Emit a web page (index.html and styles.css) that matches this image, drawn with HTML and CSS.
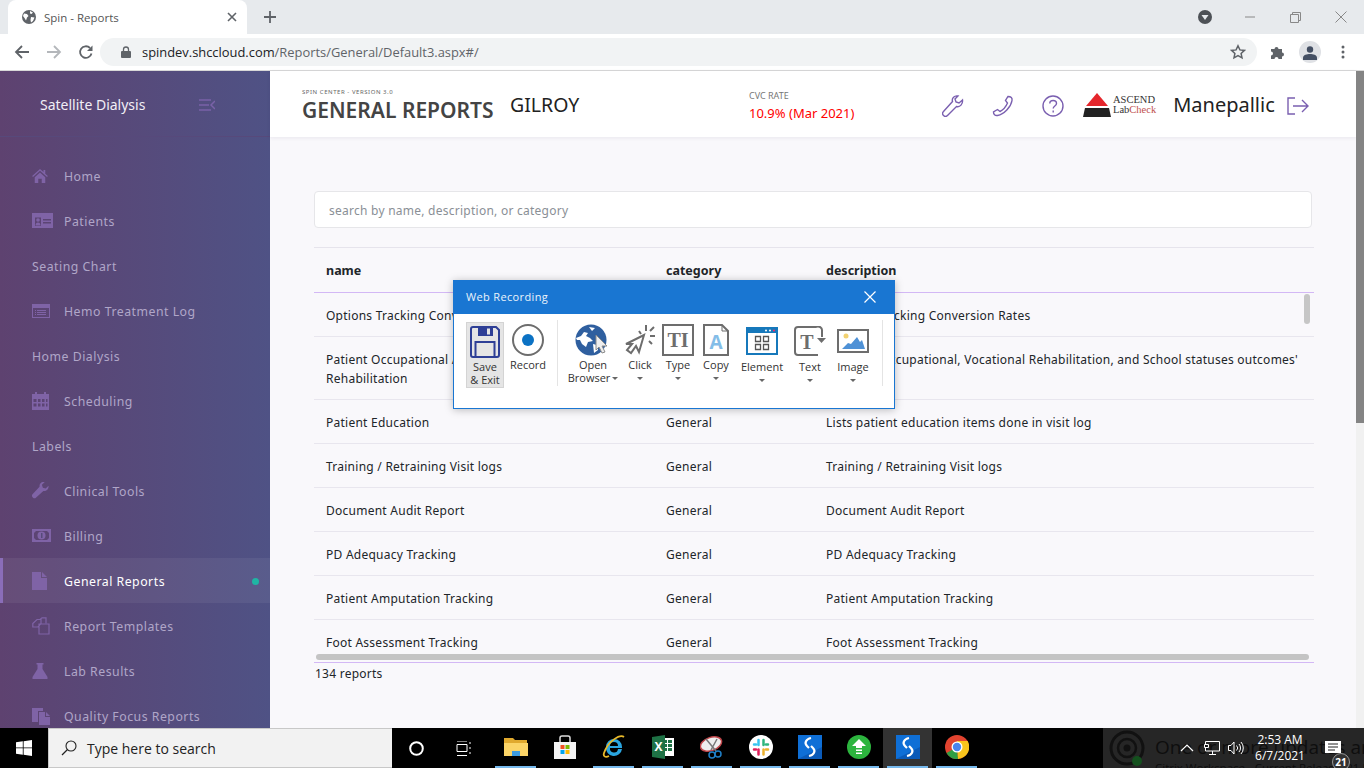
FILE: index.html

```html
<!DOCTYPE html>
<html>
<head>
  <title>Spin - Reports</title>
  <link rel="stylesheet" href="styles.css">
</head>
<body>
  <!-- browser tabs -->
  <div class="tabstrip">
    <div class="tab">
      <svg class="tab-globe" width="14" height="14" viewBox="0 0 14 14"><circle cx="7" cy="7" r="7" fill="#5f6368"/><path d="M2 3.500l3 .5 1.500 2L5 7.500l-1 3L2.500 8 1 6zM8 1l3 1.500L9.500 4 8 3.500zM9 7l3.500.5L11 11l-2 1.500-.5-2.500z" fill="#fff"/></svg>
      <span class="tab-title">Spin - Reports</span>
      <svg class="tab-close" width="10" height="10" viewBox="0 0 10 10"><path d="M1 1l8 8M9 1l-8 8" stroke="#5f6368" stroke-width="1.600"/></svg>
    </div>
    <svg class="tab-new" width="14" height="14" viewBox="0 0 14 14"><path d="M7 1v12M1 7h12" stroke="#5f6368" stroke-width="1.800"/></svg>
    <div class="window-btns">
      <svg class="win-drop" width="16" height="16" viewBox="0 0 16 16"><circle cx="8" cy="8" r="7" fill="#4d5156"/><path d="M4.500 6h7L8 11z" fill="#e7eaed"/></svg>
      <svg class="win-min" width="10" height="10" viewBox="0 0 10 10"><path d="M0 5h10" stroke="#888"/></svg>
      <svg class="win-max" width="11" height="11" viewBox="0 0 11 11"><path d="M.5 2.500h8v8h-8zM2.500 2.500v-2h8v8h-2" fill="none" stroke="#888"/></svg>
      <svg class="win-close" width="12" height="12" viewBox="0 0 12 12"><path d="M.5.5l11 11M11.500.5l-11 11" stroke="#888"/></svg>
    </div>
  </div>

  <!-- address bar -->
  <div class="toolbar">
    <svg class="nav-btn" width="16" height="16" viewBox="0 0 16 16"><path d="M15 8H2M8 2L2 8l6 6" fill="none" stroke="#5f6368" stroke-width="1.800"/></svg>
    <svg class="nav-btn" width="16" height="16" viewBox="0 0 16 16"><path d="M1 8h13M8 2l6 6-6 6" fill="none" stroke="#b4b7bb" stroke-width="1.800"/></svg>
    <svg class="nav-btn" width="16" height="16" viewBox="0 0 16 16"><path d="M13.500 9.500A5.800 5.800 0 1 1 12 4" fill="none" stroke="#5f6368" stroke-width="1.800"/><path d="M14.500 1.500v5.500H9z" fill="#5f6368"/></svg>
    <div class="omnibox">
      <svg width="10" height="12" viewBox="0 0 10 12"><path d="M2.500 5V3.500a2.500 2.500 0 0 1 5 0V5" fill="none" stroke="#5f6368" stroke-width="1.300"/><rect y="5" width="10" height="7" rx="1" fill="#5f6368"/></svg>
      <span class="url"><b>spindev.shccloud.com</b>/Reports/General/Default3.aspx#/</span>
      <svg class="star" width="16" height="16" viewBox="0 0 16 16"><path d="M8 1.800l1.900 4.100 4.500.5-3.300 3 .9 4.500L8 11.700l-4 2.200.9-4.500-3.300-3 4.500-.5z" fill="none" stroke="#5f6368" stroke-width="1.500"/></svg>
    </div>
    <svg class="puzzle" width="16" height="16" viewBox="0 0 16 16"><path d="M1 5h3.500a2 2 0 1 1 4 0H12v3.500a2 2 0 1 1 0 4V15H8.500a2 2 0 1 0-4 0H1v-3.500a2 2 0 1 0 0-4z" fill="#5f6368"/></svg>
    <div class="avatar"><svg width="14" height="14" viewBox="0 0 14 14"><circle cx="7" cy="3.500" r="3.200" fill="#444f63"/><path d="M0 14v-2.500C0 9 4 8 7 8s7 1 7 3.500V14z" fill="#444f63"/></svg></div>
    <svg class="kebab" width="4" height="14" viewBox="0 0 4 14"><circle cx="2" cy="2" r="1.500" fill="#5f6368"/><circle cx="2" cy="7" r="1.500" fill="#5f6368"/><circle cx="2" cy="12" r="1.500" fill="#5f6368"/></svg>
  </div>

  <div class="app">
    <!-- side menu -->
    <aside class="sidebar">
      <div class="brand">
        <span>Satellite Dialysis</span>
        <svg width="16" height="12" viewBox="0 0 16 12"><path d="M0 1h12M0 6h10M0 11h12M16 2l-4 4 4 4" fill="none" stroke="#7a62a8" stroke-width="1.500"/></svg>
      </div>
      <nav class="menu">
        <a class="menu-item"><span class="glyph"><svg width="16" height="14" viewBox="0 0 18 16"><path d="M9 0L0 8l1 1 8-7 8 7 1-1-3-2.700V1h-2v2.500zM3 9.500V16h4v-5h4v5h4V9.500L9 4z"/></svg></span>Home</a>
        <a class="menu-item"><span class="glyph"><svg width="21" height="15" viewBox="0 0 21 15"><path fill-rule="evenodd" d="M0 0h21v15H0zM3 4.500V13h6V4.500zM11 6v1.500h8V6zm0 3v1.500h8V9z"/><path d="M3.500 12.500c0-2 1-3 2.500-3s2.500 1 2.500 3z"/><circle cx="6" cy="7" r="1.800"/></svg></span>Patients</a>
        <a class="menu-item">Seating Chart</a>
        <a class="menu-item"><span class="glyph"><svg width="18" height="14" viewBox="0 0 18 14"><path fill-rule="evenodd" d="M0 0h18v14H0zm1 4v9h16V4zm4 2h9v1H5zm0 2h9v1H5zm0 2h9v1H5zM3 6h1v1H3zm0 2h1v1H3zm0 2h1v1H3z"/></svg></span>Hemo Treatment Log</a>
        <a class="menu-item">Home Dialysis</a>
        <a class="menu-item"><span class="glyph"><svg width="17" height="18" viewBox="0 0 17 18"><path fill-rule="evenodd" d="M3 0h2v2h7V0h2v2h3v16H0V2h3zM1.500 7v3h3V7zm4.500 0v3h2.500V7zm4 0v3h2.500V7zm4 0v3h1.500V7zM1.500 11.500v3h3v-3zm4.500 0v3h2.500v-3zm4 0v3h2.500v-3zm4 0v3h1.500v-3z"/></svg></span>Scheduling</a>
        <a class="menu-item">Labels</a>
        <a class="menu-item"><span class="glyph"><svg width="17" height="17" viewBox="0 0 18 18"><path d="M17.500 4l-3 3-3-1-1-3 3-3c-3-.8-6 1.500-5.500 5L.800 12.800a2.500 2.500 0 0 0 3.600 3.600L12 9.500c3.500.5 6-2.500 5.500-5.500z"/></svg></span>Clinical Tools</a>
        <a class="menu-item"><span class="glyph"><svg width="19" height="13" viewBox="0 0 19 13"><path fill-rule="evenodd" d="M0 0h19v13H0zM4 2L2 4v5l2 2h11l2-2V4l-2-2z"/><circle cx="9.500" cy="6.500" r="4"/><path d="M9 4h1.500v5H9z" fill="#564a7a"/></svg></span>Billing</a>
        <a class="menu-item active"><span class="glyph"><svg width="15" height="18" viewBox="0 0 15 18"><path d="M0 0h9v6h6v12H0zM10 0l5 5h-5z"/></svg></span>General Reports<i class="dot"></i></a>
        <a class="menu-item"><span class="glyph"><svg class="line" width="18" height="18" viewBox="0 0 18 18"><path d="M8 2.500L10 .8h4v5.500M.8 6.500L5 2.500h4v4l-3 3.500H.8zM7 7h10v10H7z" stroke-width="1.200"/></svg></span>Report Templates</a>
        <a class="menu-item"><span class="glyph"><svg width="16" height="16" viewBox="0 0 16 16"><path d="M4.500 0h7v1.500h-1V6l5 8v2H.5v-2l5-8V1.500h-1z"/></svg></span>Lab Results</a>
        <a class="menu-item"><span class="glyph"><svg width="18" height="18" viewBox="0 0 18 18"><path d="M0 1h11v3H6v11H0zM7 5h6v5h5v8H7zM14 5l4 4h-4z"/></svg></span>Quality Focus Reports</a>
      </nav>
    </aside>

    <main class="main">
      <header class="topbar">
        <div class="page-title">
          <small>SPIN CENTER - VERSION 3.0</small>
          <h1>GENERAL REPORTS</h1>
        </div>
        <div class="site-name">GILROY</div>
        <div class="rate">
          <small>CVC RATE</small>
          <span>10.9% (Mar 2021)</span>
        </div>
        <svg class="top-icon first" width="22" height="22" viewBox="0 0 22 22"><path d="M20.500 5l-3.500 3-3-1-1-3 3-3c-3.500-.7-6.500 2-5.500 5.500L1.500 16.500a2.800 2.800 0 0 0 4 4L14.500 11.500c3.500 1 6.500-2.500 6-6.500z"/></svg>
        <svg class="top-icon" width="22" height="22" viewBox="0 0 22 22"><path d="M16 1.500c3 0 4.500 1.500 4 4C19 12 12 19.500 5.500 20.500c-2.500.4-4-1-4-3.500l4-2.500 2.500 2c3-1.500 6-5 7.500-8.500l-2-2.500z"/></svg>
        <svg class="top-icon" width="22" height="22" viewBox="0 0 22 22"><circle cx="11" cy="11" r="10"/><path d="M7.800 8.500c0-4 6.700-4 6.700 0 0 2.500-3.300 2.500-3.300 5"/><path d="M11.200 15.500v2"/></svg>
        <div class="lab-logo">
          <svg width="28" height="24" viewBox="0 0 28 24"><path d="M14 0L25 13H3z" fill="#e5262c"/><path d="M2 15h24l2 9H0z" fill="#222"/></svg>
          <div class="lab-text"><span>ASCEND</span><span>Lab<em>Check</em></span></div>
        </div>
        <div class="user-name">Manepallic</div>
        <svg class="top-icon logout" width="22" height="18" viewBox="0 0 22 18"><path d="M8 1H1v16h7M6 9h15M15 3l6 6-6 6"/></svg>
      </header>

      <section class="content">
        <div class="search">search by name, description, or category</div>
        <div class="table-wrap">
          <table class="reports">
            <thead>
              <tr><th class="col-name">name</th><th class="col-cat">category</th><th>description</th></tr>
            </thead>
            <tbody>
              <tr><td>Options Tracking Conversion Rates</td><td>General</td><td>Options Tracking Conversion Rates</td></tr>
              <tr class="tall"><td>Patient Occupational / Vocational<br>Rehabilitation</td><td>General</td><td>Patients' Occupational, Vocational Rehabilitation, and School statuses outcomes'<br>rates</td></tr>
              <tr><td>Patient Education</td><td>General</td><td>Lists patient education items done in visit log</td></tr>
              <tr><td>Training / Retraining Visit logs</td><td>General</td><td>Training / Retraining Visit logs</td></tr>
              <tr><td>Document Audit Report</td><td>General</td><td>Document Audit Report</td></tr>
              <tr><td>PD Adequacy Tracking</td><td>General</td><td>PD Adequacy Tracking</td></tr>
              <tr><td>Patient Amputation Tracking</td><td>General</td><td>Patient Amputation Tracking</td></tr>
              <tr><td>Foot Assessment Tracking</td><td>General</td><td>Foot Assessment Tracking</td></tr>
            </tbody>
          </table>
          <div class="thumb-v"></div>
          <div class="thumb-h"></div>
        </div>
        <div class="count">134 reports</div>
      </section>
    </main>
    <div class="page-scroll"><div class="page-thumb"></div></div>

    <!-- floating recorder window -->
    <div class="recorder">
      <div class="rec-title">
        <span>Web Recording</span>
        <svg width="12" height="12" viewBox="0 0 12 12"><path d="M.5.5l11 11M11.500.5l-11 11" stroke="#fff" stroke-width="1.200"/></svg>
      </div>
      <div class="rec-tools">
        <div class="tool tool-save low">
          <div class="tool-icon"><svg width="30" height="32" viewBox="0 0 30 32"><path d="M1 3a2 2 0 0 1 2-2h23l3 3v25a2 2 0 0 1-2 2H3a2 2 0 0 1-2-2z" fill="#e5e5e5" stroke="#2e3f96" stroke-width="2"/><path d="M8 1h15v9H8z" fill="#2e3f96"/><path d="M17 2.500h3v6h-3z" fill="#e5e5e5"/><path d="M5.500 31V16h19v15" fill="none" stroke="#2e3f96" stroke-width="2"/></svg></div>
          <span>Save</span><span>&amp; Exit</span>
        </div>
        <div class="tool tool-record">
          <div class="tool-icon"><svg width="32" height="32" viewBox="0 0 32 32"><circle cx="16" cy="16" r="15" fill="#fff" stroke="#6d6d6d" stroke-width="2"/><circle cx="16" cy="16" r="6" fill="#0b72c4"/></svg></div>
          <span>Record</span>
        </div>
        <div class="tool-sep"></div>
        <div class="tool tool-open">
          <div class="tool-icon"><svg width="36" height="32" viewBox="0 0 36 32"><circle cx="16" cy="16" r="15.500" fill="#2f5f9f"/><path d="M1 14l5-2 3-4 4 1-2 3 4 2 3 3-5 1-2 5-4-3-2-4-3 0zM18 20l4 1 1 5-4 3zM14 3l6 1-3 3z" fill="#fff"/><path d="M21 11l11 11-5 0 3 6-3 1-3-6-3 3z" fill="#eee" stroke="#8a8a8a"/></svg></div>
          <span>Open</span>
          <span>Browser<i class="caret inline"></i></span>
        </div>
        <div class="tool tool-click">
          <div class="tool-icon"><svg width="31" height="32" viewBox="0 0 31 32"><path d="M1 20l18-9-5 17-3-6-5 7-4-3 5-6z" fill="#fff" stroke="#6d6d6d" stroke-width="2"/><path d="M14 7l2 3M21 1v6M29 3l-4 4M30 12h-5M27 20l-3-3" stroke="#6d6d6d" stroke-width="2"/></svg></div>
          <span>Click</span><i class="caret"></i>
        </div>
        <div class="tool tool-type">
          <div class="tool-icon"><svg width="32" height="32" viewBox="0 0 32 32"><rect x="1" y="1" width="30" height="30" fill="#fff" stroke="#6d6d6d" stroke-width="2"/><text x="16" y="23" class="icon-text">TI</text></svg></div>
          <span>Type</span><i class="caret"></i>
        </div>
        <div class="tool tool-copy">
          <div class="tool-icon"><svg width="26" height="32" viewBox="0 0 26 32"><path d="M1 1h18l6 6v24H1z" fill="#fff" stroke="#6d6d6d" stroke-width="2"/><path d="M19 1v6h6" fill="none" stroke="#6d6d6d"/><text x="13" y="25" class="icon-text light">A</text></svg></div>
          <span>Copy</span><i class="caret"></i>
        </div>
        <div class="tool tool-element low">
          <div class="tool-icon"><svg width="32" height="28" viewBox="0 0 32 28"><rect x="1" y="1" width="30" height="26" fill="#fff" stroke="#1678bb" stroke-width="2"/><path d="M1 1h30v5H1z" fill="#1678bb"/><circle cx="20" cy="3.500" r="1" fill="#fff"/><circle cx="24" cy="3.500" r="1" fill="#fff"/><circle cx="28" cy="3.500" r="1" fill="#f26"/><path d="M9.500 9.500h5v5h-5zM17.500 9.500h5v5h-5zM9.500 17.500h5v5h-5zM17.500 17.500h5v5h-5z" fill="none" stroke="#555" stroke-width="1.300"/></svg></div>
          <span>Element</span><i class="caret"></i>
        </div>
        <div class="tool tool-text low">
          <div class="tool-icon"><svg width="32" height="30" viewBox="0 0 32 30"><path d="M24 29H4a3 3 0 0 1-3-3V4a3 3 0 0 1 3-3h18a4 4 0 0 1 6 4v6" fill="none" stroke="#6d6d6d" stroke-width="2"/><path d="M23 12h9l-4.500 5z" fill="#6d6d6d"/><text x="13" y="23" class="icon-text">T</text></svg></div>
          <span>Text</span><i class="caret"></i>
        </div>
        <div class="tool tool-image low">
          <div class="tool-icon"><svg width="32" height="24" viewBox="0 0 32 24"><rect x="1" y="1" width="30" height="22" fill="#fff" stroke="#6d6d6d" stroke-width="2"/><circle cx="9" cy="7" r="2.500" fill="#f2d271"/><path d="M5 20l6-6 3 1 6-7 3 5 2-2 3 9z" fill="#4e91d6"/></svg></div>
          <span>Image</span><i class="caret"></i>
        </div>
        <div class="tool-sep"></div>
      </div>
    </div>
  </div>

  <!-- windows taskbar -->
  <footer class="taskbar">
    <div class="start"><svg width="16" height="16" viewBox="0 0 16 16"><path d="M0 2.300L6.800 1.300V7.500H0zM7.600 1.200L16 0v7.500H7.600zM0 8.300H6.800V14.700L0 13.700zM7.600 8.300H16V16L7.600 14.800z" fill="#fff"/></svg></div>
    <div class="task-search">
      <svg width="16" height="16" viewBox="0 0 16 16"><circle cx="10" cy="6" r="5" fill="none" stroke="#222" stroke-width="1.100"/><path d="M6.500 9.500L1 15" stroke="#222" stroke-width="1.300"/></svg>
      <span>Type here to search</span>
    </div>
    <div class="task-sys"><svg width="15" height="15" viewBox="0 0 15 15"><circle cx="7.500" cy="7.500" r="6.300" fill="none" stroke="#fff" stroke-width="2"/></svg></div>
    <div class="task-sys"><svg width="16" height="15" viewBox="0 0 16 15"><path d="M1 0h10M1 14.500h10M1 3.500h10v7H1zM14 1v2M14 6v2M14 11v2" fill="none" stroke="#fff"/></svg></div>
    <div class="task-apps">
      <div class="app-btn open"><svg width="24" height="22" viewBox="0 0 24 22"><path d="M0 2h9l2 2h12v16H0z" fill="#e0a92e"/><path d="M0 7h24v13H0z" fill="#fbd467"/><path d="M8 15h8v5H8z" fill="#3d9be0"/></svg></div>
      <div class="app-btn"><svg width="24" height="24" viewBox="0 0 24 24"><path d="M1 7h22v17H1z" fill="#f4f4f4"/><path d="M7 7V3a2 2 0 0 1 2-2h6a2 2 0 0 1 2 2v4" fill="none" stroke="#ddd" stroke-width="1.500"/><path d="M7.500 10h4v4h-4z" fill="#f25022"/><path d="M12.500 10h4v4h-4z" fill="#7fba00"/><path d="M7.500 15h4v4h-4z" fill="#00a4ef"/><path d="M12.500 15h4v4h-4z" fill="#ffb900"/></svg></div>
      <div class="app-btn open"><svg width="24" height="24" viewBox="0 0 24 24"><path d="M4 12a8 8 0 0 1 16 0v1H8a4 4 0 0 0 8 1h4a8 8 0 0 1-16-2zm4-1h8a4 4 0 0 0-8 0z" fill="#2aa5e0"/><path d="M22 2C18-1 6 6 2 18c-1 3 1 5 5 3" fill="none" stroke="#e8b92a" stroke-width="1.800"/></svg></div>
      <div class="app-btn open"><svg width="24" height="24" viewBox="0 0 24 24"><path d="M10 3h13v18H10z" fill="#fff"/><path d="M12 5h4v3h-4zM17 5h4v3h-4zM12 9h4v3h-4zM17 9h4v3h-4zM12 13h4v3h-4zM17 13h4v3h-4z" fill="#1e7145"/><path d="M1 2l13-2v24L1 22z" fill="#1e7145"/><text x="7.500" y="16" class="xl-text">X</text></svg></div>
      <div class="app-btn open"><svg width="24" height="24" viewBox="0 0 24 24"><ellipse cx="11" cy="9" rx="11" ry="6.500" transform="rotate(-20 11 9)" fill="#eee" stroke="#c0464a" stroke-width="1.500"/><path d="M6 4l10 12M17 4L11 15" stroke="#777" stroke-width="1.500"/><circle cx="18" cy="19" r="3" fill="none" stroke="#1f7fc7" stroke-width="1.500"/><circle cx="12" cy="20" r="3" fill="none" stroke="#1f7fc7" stroke-width="1.500"/></svg></div>
      <div class="app-btn open"><svg width="24" height="24" viewBox="0 0 24 24"><circle cx="12" cy="12" r="12" fill="#fff"/><path d="M9.500 5v5M5 9.500h2" stroke="#36c5f0" stroke-width="2.500" stroke-linecap="round"/><path d="M14.500 5v5M19 9.500h-2" stroke="#2eb67d" stroke-width="2.500" stroke-linecap="round"/><path d="M9.500 14.500v5M5 14.500h2" stroke="#e01e5a" stroke-width="2.500" stroke-linecap="round"/><path d="M14.500 14.500v5M19 14.500h-2" stroke="#ecb22e" stroke-width="2.500" stroke-linecap="round"/></svg></div>
      <div class="app-btn open"><svg width="24" height="24" viewBox="0 0 24 24"><rect width="24" height="24" fill="#0f6fd6"/><path d="M0 24L24 12v12z" fill="#0a5ab8"/><path d="M13 3C8 4 6 8 9 11l2 2M11 21c5-1 7-5 4-8l-2-2" fill="none" stroke="#fff" stroke-width="2.200"/></svg></div>
      <div class="app-btn open"><svg width="24" height="24" viewBox="0 0 24 24"><circle cx="12" cy="12" r="12" fill="#2cb43e"/><path d="M12 4l7 7h-4v2H9v-2H5zM9 14.500h6V16H9zM9 17.500h6V19H9z" fill="#fff"/></svg></div>
      <div class="app-btn open current"><svg width="24" height="24" viewBox="0 0 24 24"><rect width="24" height="24" fill="#0f6fd6"/><path d="M0 24L24 12v12z" fill="#0a5ab8"/><path d="M13 3C8 4 6 8 9 11l2 2M11 21c5-1 7-5 4-8l-2-2" fill="none" stroke="#fff" stroke-width="2.200"/></svg></div>
      <div class="app-btn open"><svg width="24" height="24" viewBox="0 0 24 24"><circle cx="12" cy="12" r="12" fill="#e2432f"/><path d="M12 12L1.600 18A12 12 0 0 0 13 24z" fill="#2f9e44"/><path d="M12 6h10.600A12 12 0 0 1 13 24z" fill="#f8c41c"/><circle cx="12" cy="12" r="5.500" fill="#fff"/><circle cx="12" cy="12" r="4.200" fill="#4a85ed"/></svg></div>
    </div>
    <!-- update toast sits behind the tray -->
    <div class="toast">
      <svg width="36" height="40" viewBox="0 0 36 40"><circle cx="18" cy="20" r="16" fill="none" stroke="#111" stroke-width="3"/><circle cx="18" cy="20" r="9" fill="none" stroke="#111" stroke-width="2.500"/><circle cx="18" cy="20" r="3.500" fill="#111"/><circle cx="28" cy="33" r="5" fill="#14501e"/></svg>
      <div class="toast-text"><b>One or more updates are available</b><span>Citrix Workspace - Current Release: 21.5.0.48</span></div>
    </div>
    <div class="tray">
      <svg class="tray-chev" width="14" height="8" viewBox="0 0 14 8"><path d="M1 7l6-6 6 6" fill="none" stroke="#fff" stroke-width="1.200"/></svg>
      <svg class="tray-net" width="16" height="14" viewBox="0 0 16 14"><path d="M1.500 3V.5h14v9.500h-14V7M8.500 10v3M5 13.500h7" fill="none" stroke="#fff"/><path d="M.5 3.500h4v3h-4z" fill="none" stroke="#fff"/></svg>
      <svg class="tray-vol" width="16" height="14" viewBox="0 0 16 14"><path d="M.5 4.500h2.500l3-3.500v12l-3-3.500H.5z" fill="none" stroke="#fff"/><path d="M8.500 4.500a3.500 3.500 0 0 1 0 5M11 3a6 6 0 0 1 0 8M13 1a9 9 0 0 1 0 12" fill="none" stroke="#fff"/></svg>
      <div class="clock"><span>2:53 AM</span><span>6/7/2021</span></div>
      <div class="notes">
        <svg width="16" height="14" viewBox="0 0 16 14"><path d="M0 0h16v12H0z" fill="#fff"/><path d="M3 3h10M3 6h10M3 9h7" stroke="#222"/></svg>
        <span class="notes-count">21</span>
      </div>
    </div>
  </footer>
</body>
</html>
```

FILE: styles.css

```css
* {
  box-sizing: border-box;
}

body {
  margin: 0;
  width: 1364px;
  height: 768px;
  overflow: hidden;
  display: flex;
  flex-direction: column;
  font-family: "Noto Sans", "Open Sans", sans-serif;
  color: #212529;
  background: #fff;
}

/* browser chrome */
.tabstrip {
  height: 34px;
  display: flex;
  align-items: flex-end;
  background: #e7eaed;
}

.tab {
  width: 239px;
  height: 34px;
  margin-left: 8px;
  padding: 0 10px 0 14px;
  display: flex;
  align-items: center;
  background: #fff;
  border-radius: 8px 8px 0 0;
}

.tab-title {
  flex: 1;
  margin-left: 8px;
  font: 11.500px "Open Sans", sans-serif;
  color: #555;
}

.tab-new {
  margin: 0 0 10px 16px;
}

.window-btns {
  margin-left: auto;
  height: 34px;
  display: flex;
  align-items: center;
  padding-right: 17px;
}

.win-min {
  margin-left: 32px;
}

.win-max {
  margin-left: 35px;
}

.win-close {
  margin-left: 34px;
}

.toolbar {
  height: 37px;
  display: flex;
  align-items: center;
  padding: 0 0 1px 14px;
  border-bottom: 1px solid #d8d8d8;
  background: #fff;
}

.nav-btn {
  margin-right: 16px;
}

.omnibox {
  width: 1157px;
  height: 28px;
  margin-left: -10px;
  padding: 0 11px 0 21px;
  display: flex;
  align-items: center;
  background: #f1f3f4;
  border-radius: 14px;
}

.url {
  margin-left: 11px;
  font: 12.900px "Open Sans", sans-serif;
  color: #5f6368;
}

.url b {
  font-weight: 400;
  color: #202124;
}

.star {
  margin-left: auto;
}

.puzzle {
  margin-left: 13px;
}

.avatar {
  width: 22px;
  height: 22px;
  margin-left: 13px;
  display: flex;
  align-items: flex-end;
  justify-content: center;
  padding-bottom: 3px;
  background: #dfe1e5;
  border-radius: 50%;
}

.kebab {
  margin-left: 20px;
}

/* app frame */
.app {
  position: relative;
  height: 657px;
  display: flex;
}

.sidebar {
  flex: 0 0 270px;
  overflow: hidden;
  background: linear-gradient(90deg, #5e4270, #4f5285);
}

.brand {
  height: 66px;
  padding: 2px 55px 0 40px;
  display: flex;
  align-items: center;
  justify-content: space-between;
  font-size: 14px;
  color: #f1eef6;
  border-bottom: 1px solid #57497b;
}

.menu {
  padding-top: 16px;
}

.menu-item {
  height: 45px;
  padding: 2px 0 0 32px;
  display: flex;
  align-items: center;
  font-size: 12.300px;
  letter-spacing: 0.500px;
  color: #b0a6c8;
}

.menu-item.active {
  padding-left: 29px;
  color: #fff;
  background: rgba(255, 255, 255, 0.060);
  border-left: 3px solid #8a6db8;
}

.glyph {
  width: 32px;
  flex: none;
  display: flex;
  align-items: center;
  margin-top: -2px;
}

.glyph svg {
  fill: #7f63a6;
}

.glyph svg.line {
  fill: none;
  stroke: #7f63a6;
}

.dot {
  width: 7px;
  height: 7px;
  margin-left: auto;
  margin-right: 11px;
  background: #1fb5a4;
  border-radius: 50%;
}

.main {
  flex: 1;
  min-width: 0;
  display: flex;
  flex-direction: column;
  background: #f9f8fb;
}

.page-scroll {
  flex: 0 0 8px;
  background: #f1f1f1;
}

.page-thumb {
  height: 352px;
  background: #848484;
}

/* page header */
.topbar {
  height: 66px;
  display: flex;
  align-items: center;
  padding-left: 32px;
  background: #fff;
  box-shadow: 0 1px 4px rgba(40, 30, 80, 0.080);
}

.page-title {
  width: 208px;
  padding-top: 4px;
}

.page-title small {
  display: block;
  font-size: 6px;
  letter-spacing: 0.550px;
  color: #666;
}

.page-title h1 {
  margin: 0;
  font-size: 21px;
  font-weight: 600;
  line-height: 28px;
  color: #444;
  white-space: nowrap;
}

.site-name {
  width: 239px;
  padding-top: 1px;
  font-size: 19.500px;
  color: #222;
}

.rate {
  width: 183px;
  padding-top: 3px;
}

.rate small {
  display: block;
  margin-bottom: -1px;
  font-size: 9px;
  color: #777;
}

.rate span {
  font-size: 13px;
  color: #f00;
}

.top-icon {
  margin: 3px 28px 0 0;
  fill: none;
  stroke: #7a5fb0;
  stroke-width: 1.400;
}

.top-icon.first {
  margin-left: 10px;
}

.lab-logo {
  margin-left: -9px;
  padding-top: 2px;
  display: flex;
  align-items: center;
  gap: 2px;
  font-family: "Liberation Serif", serif;
}

.lab-text {
  display: flex;
  flex-direction: column;
  font-size: 10.500px;
  line-height: 10px;
  color: #333;
}

.lab-text em {
  font-style: normal;
  color: #c0504d;
}

.user-name {
  margin-left: 17px;
  width: 114px;
  font-size: 20px;
  color: #222;
}

.logout {
  margin: 3px 0 0;
}

/* report list */
.content {
  padding: 54px 0 0 44px;
}

.search {
  width: 998px;
  height: 37px;
  padding-left: 14px;
  font-size: 12px;
  letter-spacing: 0.250px;
  line-height: 37px;
  color: #8a8f96;
  background: #fff;
  border: 1px solid #e6e6e9;
  border-radius: 4px;
}

.table-wrap {
  position: relative;
  width: 1000px;
  height: 416px;
  margin-top: 19px;
  overflow: hidden;
  border-top: 1px solid #e6e4ec;
  border-bottom: 1px solid #d3b8f5;
}

.reports {
  width: 100%;
  border-collapse: collapse;
  table-layout: fixed;
  font-size: 12px;
  letter-spacing: 0.250px;
}

.reports th {
  height: 44px;
  padding: 2px 0 0 12px;
  text-align: left;
  font-size: 12.500px;
  font-weight: 700;
  letter-spacing: 0;
  border-bottom: 1px solid #d3b8f5;
}

.col-name {
  width: 340px;
}

.col-cat {
  width: 160px;
}

.reports td {
  height: 44px;
  padding: 2px 0 0 12px;
  line-height: 19px;
  white-space: nowrap;
  border-bottom: 1px solid #e8e6ee;
}

.reports .tall td {
  height: 63px;
}

.thumb-v {
  position: absolute;
  top: 46px;
  right: 4px;
  width: 6px;
  height: 30px;
  background: #c6c6c6;
  border-radius: 3px;
}

.thumb-h {
  position: absolute;
  left: 2px;
  bottom: 2px;
  width: 993px;
  height: 6px;
  background: #c4c4c4;
  border-radius: 3px;
}

.count {
  margin-top: 2px;
  padding-left: 1px;
  font-size: 12px;
  letter-spacing: 0.250px;
}

/* recorder window */
.recorder {
  position: absolute;
  left: 453px;
  top: 209px;
  width: 442px;
  height: 129px;
  background: #fff;
  border: 1px solid #1976d2;
  box-shadow: 0 1px 8px rgba(0, 0, 0, 0.250);
  font-family: "Open Sans", sans-serif;
  font-size: 11px;
  color: #333;
}

.rec-title {
  height: 33px;
  padding: 0 18px 2px 12px;
  display: flex;
  align-items: center;
  justify-content: space-between;
  font-size: 11px;
  letter-spacing: 0.350px;
  color: #eaf3fb;
  background: #1976d2;
}

.rec-tools {
  padding-left: 12px;
  display: flex;
  align-items: flex-start;
}

.tool {
  height: 66px;
  margin-top: 8px;
  display: flex;
  flex-direction: column;
  align-items: center;
  line-height: 13px;
  white-space: nowrap;
}

.tool-icon {
  height: 36px;
  display: flex;
  align-items: center;
  justify-content: center;
}

.tool.low .tool-icon {
  height: 38px;
}

.tool-save {
  width: 38px;
  background: #e5e5e5;
  border: 1px solid #d4d4d4;
}

.tool.tool-save .tool-icon {
  height: 37px;
}

.tool-record {
  width: 44px;
  margin-left: 2px;
}

.tool-sep {
  width: 1px;
  height: 66px;
  margin: 6px 10px 0 7px;
  background: #e4e4e4;
}

.tool-open {
  width: 50px;
}

.tool-click,
.tool-copy {
  width: 44px;
}

.tool-type {
  width: 32px;
}

.tool-element,
.tool-text {
  width: 48px;
}

.tool-image {
  width: 38px;
  margin-right: 3px;
}

.caret {
  width: 0;
  height: 0;
  margin-top: 6px;
  border: 3px solid transparent;
  border-bottom: 0;
  border-top: 3px solid #666;
}

.caret.inline {
  display: inline-block;
  margin: 0 0 2px 2px;
}

.icon-text {
  font: 700 20px "Liberation Serif", serif;
  fill: #6d6d6d;
  text-anchor: middle;
}

.icon-text.light {
  font: 700 19px "Open Sans", sans-serif;
  fill: #84bde8;
}

.xl-text {
  font: 700 12px "Open Sans", sans-serif;
  fill: #fff;
  text-anchor: middle;
}

/* taskbar */
.taskbar {
  position: relative;
  height: 40px;
  display: flex;
  align-items: stretch;
  background: #000;
}

.start {
  width: 48px;
  display: flex;
  align-items: center;
  justify-content: center;
}

.task-search {
  width: 344px;
  padding-left: 12px;
  display: flex;
  align-items: center;
  gap: 10px;
  font: 14px "Open Sans", sans-serif;
  color: #222;
  background: #f2f2f2;
  border: 1px solid #c8c8c8;
  border-right: 0;
}

.task-sys {
  width: 48px;
  display: flex;
  align-items: center;
  justify-content: center;
}

.task-apps {
  margin-left: 3px;
  display: flex;
}

.app-btn {
  width: 49px;
  display: flex;
  align-items: center;
  justify-content: center;
  border-bottom: 2px solid transparent;
}

.app-btn.open {
  border-image: linear-gradient(90deg, transparent 10%, #76b9ed 10%, #76b9ed 90%, transparent 90%) 1;
}

.app-btn.current {
  background: #333;
}

.toast {
  position: absolute;
  left: 1103px;
  top: 0;
  width: 261px;
  height: 40px;
  padding-left: 6px;
  display: flex;
  gap: 10px;
  overflow: hidden;
  background: #262626;
  white-space: nowrap;
}

.toast svg {
  flex: none;
}

.toast-text {
  display: flex;
  flex-direction: column;
  padding-top: 6px;
  font-family: "Open Sans", sans-serif;
  color: #0e0e0e;
}

.toast-text b {
  font-size: 19px;
  font-weight: 400;
  line-height: 26px;
}

.toast-text span {
  font-size: 11.500px;
}

.tray {
  position: absolute;
  right: 0;
  top: 0;
  height: 40px;
  display: flex;
  align-items: center;
  color: #fff;
  font: 12px "Open Sans", sans-serif;
}

.tray-net {
  margin-left: 10px;
}

.tray-vol {
  margin-left: 8px;
}

.clock {
  width: 62px;
  margin-left: 5px;
  display: flex;
  flex-direction: column;
  align-items: center;
  line-height: 16px;
}

.notes {
  position: relative;
  width: 53px;
  padding-left: 14px;
  display: flex;
  align-items: center;
}

.notes-count {
  position: absolute;
  left: 21px;
  top: 12px;
  width: 18px;
  height: 18px;
  font-size: 10px;
  font-weight: 700;
  line-height: 16px;
  text-align: center;
  background: #333;
  border: 1px solid #999;
  border-radius: 50%;
}
```
